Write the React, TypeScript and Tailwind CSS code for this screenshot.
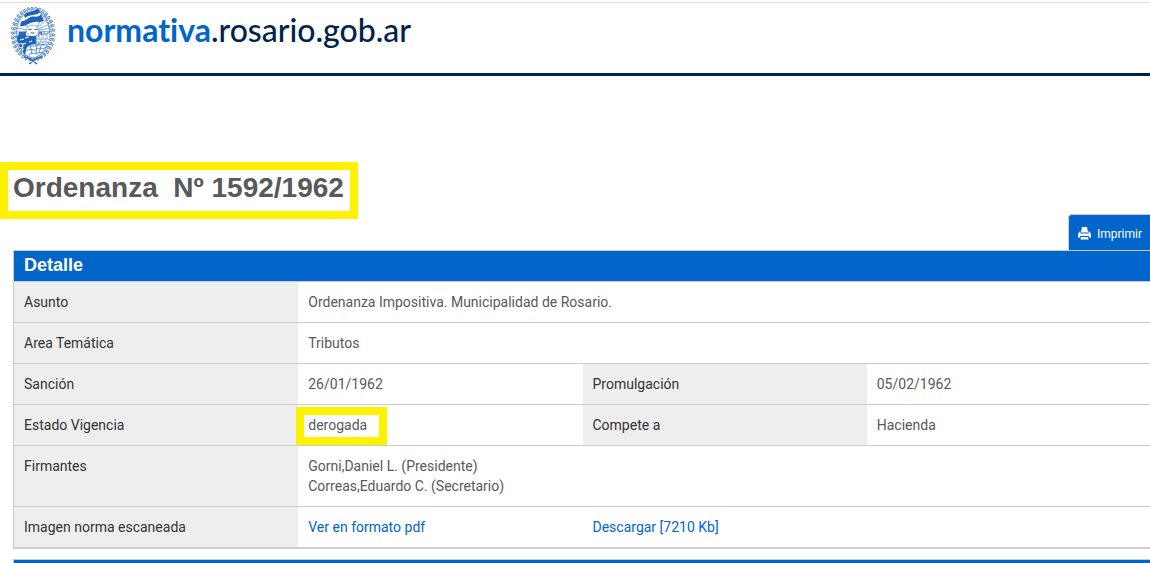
import type { ReactNode } from "react";

interface Field {
  label?: string;
  value: ReactNode;
  span?: number;
}

const ROWS: Field[][] = [
  [{ label: "Asunto", value: "Ordenanza Impositiva. Municipalidad de Rosario.", span: 3 }],
  [{ label: "Area Temática", value: "Tributos", span: 3 }],
  [
    { label: "Sanción", value: "26/01/1962" },
    { label: "Promulgación", value: "05/02/1962" },
  ],
  [
    { label: "Estado Vigencia", value: <Highlighted>derogada</Highlighted> },
    { label: "Compete a", value: "Hacienda" },
  ],
  [
    {
      label: "Firmantes",
      value: (
        <>
          Gorni,Daniel L. (Presidente)
          <br />
          Correas,Eduardo C. (Secretario)
        </>
      ),
      span: 3,
    },
  ],
  [
    { label: "Imagen norma escaneada", value: <DocLink>Ver en formato pdf</DocLink> },
    { value: <DocLink>Descargar [7210 Kb]</DocLink>, span: 2 },
  ],
];

function Highlighted({ children }: { children: ReactNode }) {
  return (
    <span className="relative inline-block">
      {children}
      <span className="pointer-events-none absolute -left-3 -right-5 -top-2 -bottom-2.5 border-8 border-[#fff200]" />
    </span>
  );
}

function DocLink({ children }: { children: ReactNode }) {
  return (
    <a href="#" className="text-[#0066cc] hover:underline">
      {children}
    </a>
  );
}

// laurel wreath leaves, placed along the oval
const LEAVES = Array.from({ length: 34 }, (_, i) => {
  const a = (i / 34) * Math.PI * 2;
  return {
    x: 23 + Math.cos(a) * 19.5,
    y: 27 + Math.sin(a) * 24.5,
    angle: (a * 180) / Math.PI,
  };
});

function Crest() {
  return (
    <svg viewBox="0 0 46 58" className="h-[58px] w-[46px] shrink-0" role="img" aria-label="Escudo">
      <defs>
        <clipPath id="oval">
          <path d="M23 5c10 0 16.500 9 16.500 21S33 49 23 51C13 49 6.500 38 6.500 26S13 5 23 5z" />
        </clipPath>
      </defs>
      <g fill="#fff" stroke="#2e6fbb" strokeWidth="0.8">
        {LEAVES.map(({ x, y, angle }, i) => (
          <g key={i} transform={`translate(${x} ${y}) rotate(${angle})`}>
            <ellipse cx="1.4" cy="0" rx="1.5" ry="1" transform="rotate(35)" />
            <ellipse cx="-1.6" cy="0.4" rx="1.4" ry="0.9" transform="rotate(-35)" />
          </g>
        ))}
      </g>
      <path
        d="M23 5c10 0 16.500 9 16.500 21S33 49 23 51C13 49 6.500 38 6.500 26S13 5 23 5z"
        fill="#fff"
        stroke="#4a84c8"
        strokeWidth="0.8"
      />
      <g clipPath="url(#oval)">
        {/* rising sun */}
        <path
          d="M24 24 40 17M24 24l17-3M24 24l18 1M24 24 37 12M24 24 33 10M24 24 6 21M24 24 6 25M24 24 12 16"
          stroke="#5c91ce"
          strokeWidth="0.8"
        />
        <circle cx="22.500" cy="24" r="6" fill="#fff" stroke="#6b9bd2" strokeWidth="0.7" />
        <path d="M18.500 22.500h3m3 0h3M20.500 26h4" stroke="#1f5fb0" strokeWidth="1.2" fill="none" />
        <path d="M9 25h7v4H8zM29 25h3v3h-4z" fill="#2b6cb8" />
      </g>
      {/* flag */}
      <path d="M11 17C12 10 14 6 18 4c4-1 6 0 9-3l5 10c-4 3-6 0-11 2-4 1-6 4-10 4z" fill="#fff" />
      <path d="M14 8c3-5 9-2 14-7l2 4.500c-4 3.500-9 1-15 5.500z" fill="#1f64b5" />
      <path d="M11 14.500c4 0 7-4 11-5 4 0 6 1 9-2l3 6c-4 3-7 0-12 2-4 1-7 4-12 4z" fill="#1f64b5" />
      <g clipPath="url(#oval)">
        <path d="M6 29h5l2-2 4 2h9v8l-6 1-3 2-2 8-9-8z" fill="#1f64b5" />
        <path
          d="m15 31 4-1M10 33l4-1m5 3 3-1M8 37c3-1 5 1 8-1M9 40l3 1m0 3 2-2m-1-5-1 8"
          stroke="#fff"
          strokeWidth="1"
          fill="none"
        />
        {/* fortress wall */}
        <path d="M26 29h3v-3h2v2h2v-2h2v2h2v-2h3v12H26z" fill="#fff" stroke="#3c7ac2" strokeWidth="0.8" />
        <path d="M26 32h14M26 35h14M29 29v3m4-3v3m4-3v3m-6 0v3m4-3v3m-6 0v3m4-3v3m4-3v3" stroke="#5c91ce" strokeWidth="0.7" />
        {/* river and fields */}
        <path
          d="M17 40c3-3 6 1 9-2s6 1 9-1M17 44c4-4 6 1 10-2 3-2 6 1 9-2M19 48c3-4 6 0 9-2 2-1 4 0 6-1M20 38l2 9m5-9-1 9m5-8-2 7"
          stroke="#4a84c8"
          strokeWidth="0.9"
          fill="none"
        />
      </g>
      <path
        d="M14 50c4 0 8 3 13 7M32 50c-4 0-8 3-13 7M20.500 53h5"
        stroke="#2b6cb8"
        strokeWidth="1.6"
        fill="none"
      />
    </svg>
  );
}

function PrintIcon() {
  return (
    <svg viewBox="0 0 13 13" className="size-[13px]" fill="currentColor" aria-hidden="true">
      <path d="M4 0h5l1 5.500H3z" />
      <path d="M1.500 4.500h1L2.300 6.500h8.400L10.500 4.500h1L13 7v3.500h-1.800L10.700 9H2.300L1.800 10.500H0V7z" />
      <path d="M3 10h7l.6 2.500H2.400z" />
    </svg>
  );
}

function DetailTable() {
  return (
    <div className="border-b-2 border-l border-t border-[#cccccc]">
      <h2
        id="detalle"
        className="h-[30px] bg-[#0066cc] px-2.5 font-['Liberation_Sans',sans-serif] text-lg leading-7 font-bold text-white"
      >
        Detalle
      </h2>
      <table aria-labelledby="detalle" className="w-full table-fixed border-separate border-spacing-0 text-sm leading-5">
        <tbody>
          {ROWS.map((fields, i) => (
            <tr key={i}>
              {fields.map(({ label, value, span }, j) => (
                <FieldCells key={j} label={label} value={value} span={span} />
              ))}
            </tr>
          ))}
        </tbody>
      </table>
    </div>
  );
}

function FieldCells({ label, value, span }: Field) {
  return (
    <>
      {label && (
        <th
          scope="row"
          className="w-1/4 border-t border-[#cccccc] bg-[#eeeeee] px-2.5 py-2.5 text-left align-top font-normal text-[#333333]"
        >
          {label}
        </th>
      )}
      <td colSpan={span} className="border-t border-[#cccccc] px-2.5 py-2.5 align-top text-[#58595b]">
        {value}
      </td>
    </>
  );
}

export default function App() {
  return (
    <div className="overflow-x-hidden bg-white pt-0.5 font-[Roboto,sans-serif] text-[#58595b]">
      <header className="flex h-[74px] items-start gap-[11px] border-t border-b-3 border-t-[#e0e0e0] border-b-[#00234b] pt-1 pl-2.5">
        <Crest />
        <a
          href="#"
          className="pt-[3px] font-[Lato,sans-serif] text-[32px] leading-10 font-medium text-[#00234b] [font-variant-ligatures:none]"
        >
          <span className="font-bold text-[#0066cc]">normativa</span>.rosario.gob.ar
        </a>
      </header>

      <main className="pt-[86px]">
        <h1 className="w-fit border-8 border-[#fff200] pr-1.5 pb-1.5 pl-[5px] font-['Liberation_Sans',sans-serif] text-[28px] leading-[35px] font-bold whitespace-pre">
          {"Ordenanza  Nº 1592/1962"}
        </h1>
        <div className="-mt-[5px] flex justify-end">
          <button
            type="button"
            className="flex h-9 items-center gap-1.5 rounded-tl-sm border-t border-l border-[#cccccc] bg-[#0066cc] pt-0.5 pr-2 pl-[9px] text-[12px] text-white"
          >
            <PrintIcon />
            Imprimir
          </button>
        </div>
        <section className="-mr-px ml-[13px]">
          <DetailTable />
          <div className="mt-2.5 h-1 border-t border-l border-[#cccccc] bg-[#0066cc]" />
        </section>
      </main>
    </div>
  );
}
